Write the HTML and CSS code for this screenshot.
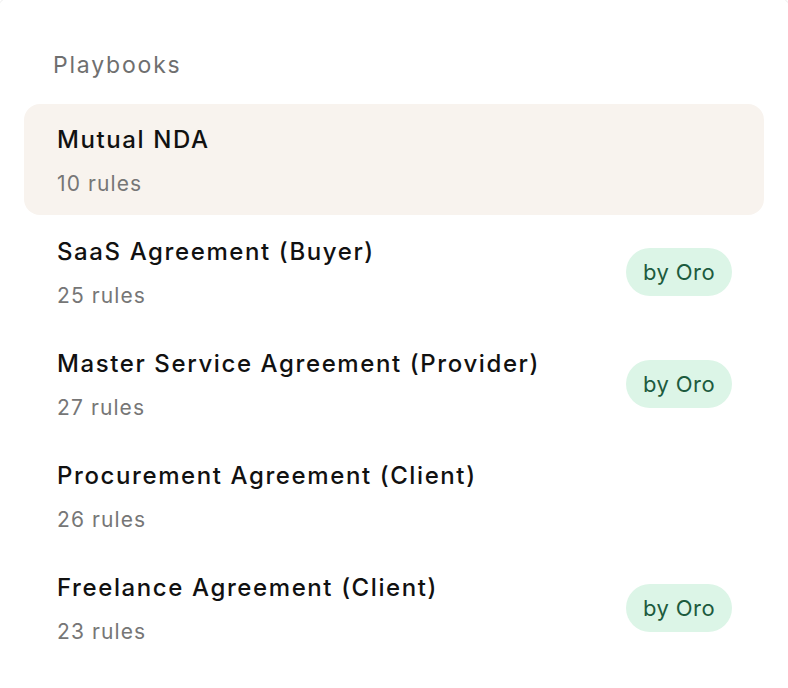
FILE: index.html
```html
<!DOCTYPE html>
<html lang="en">
<head>
<meta charset="utf-8">
<title>Playbooks</title>
<link rel="stylesheet" href="styles.css">
</head>
<body>
<div class="card">
  <h2 class="heading">Playbooks</h2>
  <ul class="list">
    <li class="item active">
      <div class="info"><div class="name">Mutual NDA</div><div class="count">10 rules</div></div>
    </li>
    <li class="item">
      <div class="info"><div class="name">SaaS Agreement (Buyer)</div><div class="count">25 rules</div></div>
      <span class="badge">by Oro</span>
    </li>
    <li class="item">
      <div class="info"><div class="name">Master Service Agreement (Provider)</div><div class="count">27 rules</div></div>
      <span class="badge">by Oro</span>
    </li>
    <li class="item">
      <div class="info"><div class="name">Procurement Agreement (Client)</div><div class="count">26 rules</div></div>
    </li>
    <li class="item">
      <div class="info"><div class="name">Freelance Agreement (Client)</div><div class="count">23 rules</div></div>
      <span class="badge">by Oro</span>
    </li>
  </ul>
</div>
</body>
</html>
```
FILE: styles.css
```css
html, body {
  margin: 0;
  padding: 0;
  background: #ffffff;
  overflow: hidden;
}
body {
  font-family: Inter, "Noto Sans", sans-serif;
  width: 788px;
  height: 688px;
}
.card {
  box-sizing: border-box;
  margin: -12px -12px 0 -12px;
  height: 700px;
  padding: 60px 35px 0 35px;
  border: 1px solid #f1f1f1;
  border-bottom: none;
  border-radius: 44px 44px 0 0;
}
.heading {
  margin: 0 0 23px 29px;
  font-size: 23px;
  font-weight: 400;
  color: #6f6f6f;
  line-height: 32px;
  letter-spacing: 1.8px;
}
.list {
  list-style: none;
  margin: 0;
  padding: 0;
  display: flex;
  flex-direction: column;
  gap: 1px;
}
.item {
  display: flex;
  align-items: flex-start;
  justify-content: space-between;
  height: 111px;
  padding: 21px 32px 0 33px;
  border-radius: 16px;
  box-sizing: border-box;
}
.item.active {
  background: #f8f3ee;
}
.info {
  display: flex;
  flex-direction: column;
  gap: 16px;
}
.name {
  font-size: 24px;
  font-weight: 450;
  color: #111111;
  line-height: 30px;
  letter-spacing: 1.6px;
}
.count {
  font-size: 21px;
  color: #767676;
  line-height: 26px;
  letter-spacing: 1.1px;
}
.badge {
  align-self: center;
  margin-top: -21px;
  display: inline-flex;
  align-items: center;
  height: 48px;
  padding: 0 17px;
  border-radius: 24px;
  background: #dcf5e7;
  color: #1d5b3e;
  font-size: 22px;
  letter-spacing: 0.4px;
}
```
